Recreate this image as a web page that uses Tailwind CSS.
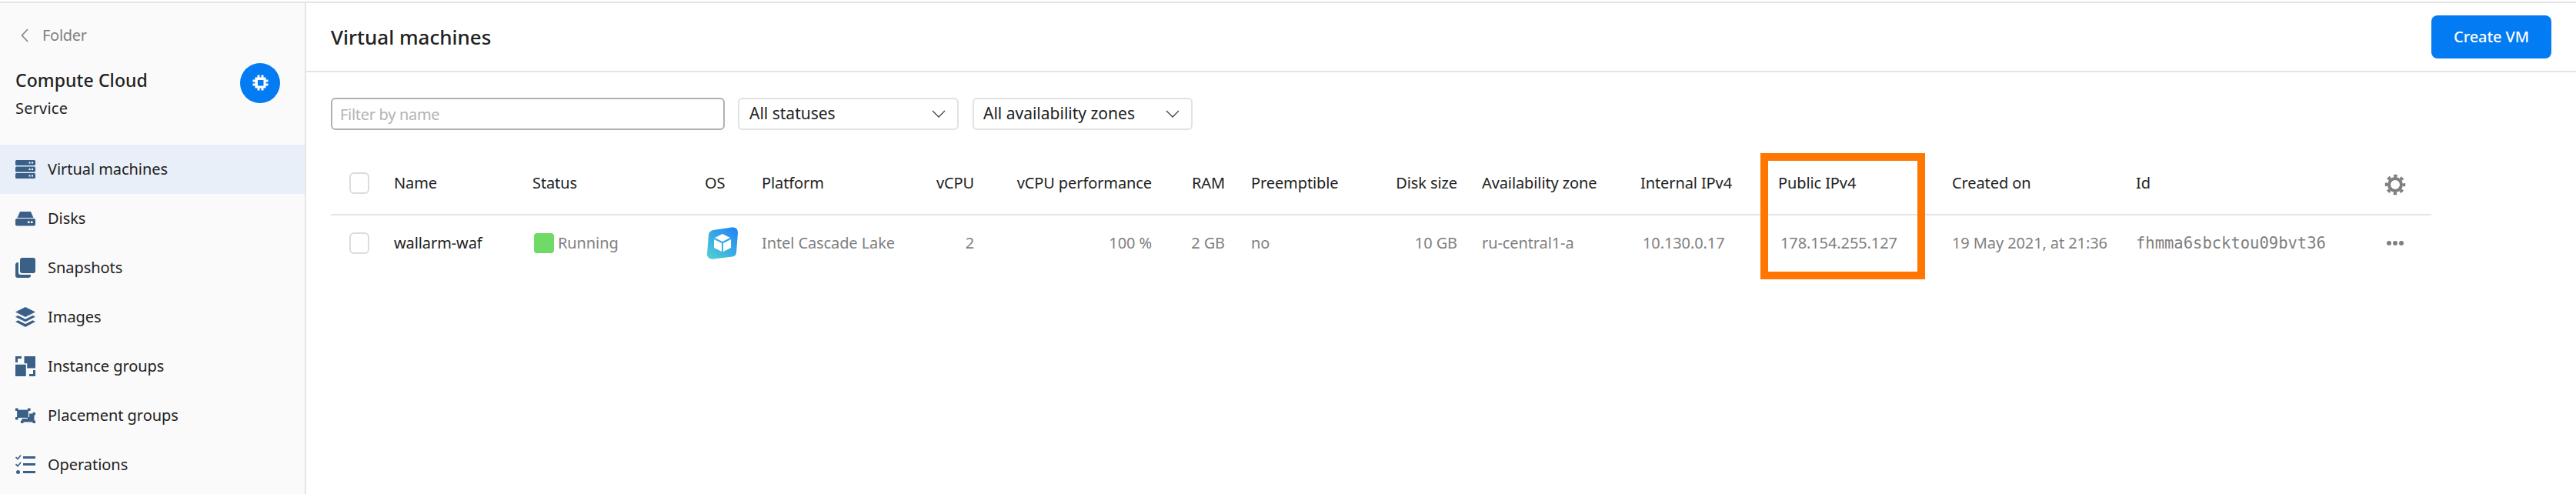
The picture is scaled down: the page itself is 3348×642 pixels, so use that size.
<!DOCTYPE html>
<html lang="en">
<head>
  <meta charset="UTF-8" />
  <title>Virtual machines</title>
  <script src="https://cdn.jsdelivr.net/npm/@tailwindcss/browser@4"></script>
</head>
<body class="bg-white font-['Noto_Sans',sans-serif] text-[#222222] overflow-hidden">
  <div class="relative h-[642px] w-[3348px] pt-[2px]">
    <div class="flex h-[640px] border-t-2 border-[#e5e5e5]">

      <!-- sidebar -->
      <aside class="w-[398px] shrink-0 border-r-2 border-[#e5e5e5] bg-[#fafafa]">
        <div class="flex h-[68px] items-center gap-[18px] pl-[27px] pt-[16px] text-[20px] tracking-[-0.3px] text-[#808080]">
          <svg class="h-[18px] w-[10px]" viewBox="0 0 10 18" fill="none" stroke="#808080" stroke-width="1.6"><path d="M9 1 1.5 9 9 17" /></svg>
          <span>Folder</span>
        </div>
        <div class="relative h-[116px] px-[20px]">
          <div class="pt-[12px] text-[23px] font-medium leading-[40px] tracking-[0.1px]">Compute Cloud</div>
          <div class="text-[20px] leading-[34px] tracking-[0.2px]">Service</div>
          <div class="absolute left-[312px] top-[10px] flex h-[52px] w-[52px] items-center justify-center rounded-full bg-[#027bf3]">
            <svg class="h-[26px] w-[26px]" viewBox="0 0 26 26" fill="#fff"><path fill-rule="evenodd" d="M6 4h3V1h3v3h2V1h3v3h3v3h3v3h-3v2h3v3h-3v3h-3v3h-3v-3h-2v3H9v-3H6v-3H3v-3h3v-2H3V7h3Zm3.500 3.500v7.500h7.500V7.500Z" transform="translate(0.500 1.500)" /></svg>
          </div>
        </div>
        <nav class="text-[20px] tracking-[-0.05px]">
          <a class="flex h-[64px] items-center gap-[16px] bg-[#e9eff9] pl-[20px]">
            <svg class="h-[26px] w-[26px]" viewBox="0 0 26 26" fill="#3b6088"><rect y="1" width="26" height="7" rx="1.500" /><rect y="9.500" width="26" height="7" rx="1.500" /><rect y="18" width="26" height="7" rx="1.500" /><path fill="#fff" d="M17.500 3.500h2v2h-2zM21 3.500h2v2h-2zM17.500 12h2v2h-2zM21 12h2v2h-2zM17.500 20.500h2v2h-2zM21 20.500h2v2h-2z" /></svg>
            <span>Virtual machines</span>
          </a>
          <a class="flex h-[64px] items-center gap-[16px] pl-[20px]">
            <svg class="h-[26px] w-[26px]" viewBox="0 0 26 26" fill="#3b6088"><path d="M6 4h14l3.500 8h-21Z" /><rect y="13" width="26" height="9.500" rx="2" /><path fill="#fff" d="M16 16.500h2.500V19H16zM20 16.500h2.500V19H20z" /></svg>
            <span>Disks</span>
          </a>
          <a class="flex h-[64px] items-center gap-[16px] pl-[20px]">
            <svg class="h-[26px] w-[26px]" viewBox="0 0 26 26" fill="#3b6088"><path d="M3.500 6H4v13a3 3 0 0 0 3 3h13v1a3 3 0 0 1-3 3H3a3 3 0 0 1-3-3V9.500A3.500 3.500 0 0 1 3.500 6Z" /><rect x="6" width="20" height="20" rx="3" /></svg>
            <span>Snapshots</span>
          </a>
          <a class="flex h-[64px] items-center gap-[16px] pl-[20px]">
            <svg class="h-[26px] w-[26px]" viewBox="0 0 26 26" fill="#3b6088"><path d="M13 0 26 6.500 13 13 0 6.500Z" /><path d="M3.500 11 13 15.700 22.500 11 26 12.800 13 19.300 0 12.800Z" /><path d="M3.500 17.200 13 22 22.500 17.200 26 19 13 26 0 19Z" /></svg>
            <span>Images</span>
          </a>
          <a class="flex h-[64px] items-center gap-[16px] pl-[20px]">
            <svg class="h-[26px] w-[26px]" viewBox="0 0 26 26" fill="#3b6088"><rect x="11.500" width="14.500" height="15.500" /><rect x="-1.500" y="10" width="16" height="17.500" stroke="#fafafa" stroke-width="1.500" /><path d="M0 0h8v3H3v5H0Z" /><path d="M26 18v8h-8v-3h5v-5Z" /></svg>
            <span>Instance groups</span>
          </a>
          <a class="flex h-[64px] items-center gap-[16px] pl-[20px]">
            <svg class="h-[26px] w-[26px]" viewBox="0 0 26 26" fill="#3b6088"><rect x="8.500" y="10.500" width="16" height="11" /><path d="M7 19.500h3.500V23H7zM22.500 9H26v3.500h-3.500zM22.500 19.500H26V23h-3.500z" /><rect x="1.500" y="5" width="16" height="11.500" stroke="#fafafa" stroke-width="1.200" /><path d="M0 3.500h3.500V7H0zM16 3.500h3.500V7H16zM0 15h3.500v3.500H0zM16 15h3.500v3.500H16z" /></svg>
            <span>Placement groups</span>
          </a>
          <a class="flex h-[64px] items-center gap-[16px] pl-[20px]">
            <svg class="h-[26px] w-[26px]" viewBox="0 0 26 26" fill="#3b6088"><path d="M10 2h16v3H10zM10 11h16v3H10zM10 21h16v3H10z" /><circle cx="3.500" cy="22.500" r="2.500" /><path fill="none" stroke="#3b6088" stroke-width="1.700" d="M.5 3 3 5.500 7 .8M.5 12.200 3 14.700 7 10" /></svg>
            <span>Operations</span>
          </a>
        </nav>
      </aside>

      <!-- main -->
      <main class="flex-1">
        <header class="flex h-[90px] items-center justify-between border-b-2 border-[#e5e5e5] pl-[32px] pr-[32px]">
          <h1 class="text-[26px] font-medium">Virtual machines</h1>
          <button class="h-[56px] w-[156px] rounded-[8px] bg-[#027bf3] text-[20px] font-medium tracking-[-0.1px] text-white">Create VM</button>
        </header>

        <div class="flex items-center pl-[32px] pt-[33px]">
          <input class="h-[42px] w-[512px] rounded-[6px] border-2 border-[#b0b0b0] px-[10px] text-[20px] tracking-[-0.3px] placeholder-[#b3b3b3] outline-none" placeholder="Filter by name" />
          <div class="ml-[17px] flex h-[42px] w-[287px] items-center justify-between rounded-[6px] border-2 border-[#e2e2e2] pl-[13px] pr-[15px] text-[21px]">
            <span>All statuses</span>
            <svg class="h-[10px] w-[18px]" viewBox="0 0 18 10" fill="none" stroke="#444" stroke-width="1.300"><path d="M1 1l8 8 8-8" /></svg>
          </div>
          <div class="ml-[18px] flex h-[42px] w-[286px] items-center justify-between rounded-[6px] border-2 border-[#e2e2e2] pl-[12px] pr-[15px] text-[21px]">
            <span>All availability zones</span>
            <svg class="h-[10px] w-[18px]" viewBox="0 0 18 10" fill="none" stroke="#444" stroke-width="1.300"><path d="M1 1l8 8 8-8" /></svg>
          </div>
        </div>

        <div class="ml-[32px] mt-[40px] w-[2730px] text-[20px] tracking-[-0.1px]">
          <div class="grid h-[71px] grid-cols-[82px_180px_224px_74px_224px_52px_231px_95px_166px_136px_238px_179px_226px_239px_322px_62px] items-center border-b-2 border-[#e5e5e5] pb-[11px] font-[450]">
            <div class="pl-[24px]"><div class="h-[28px] w-[26px] rounded-[6px] border-2 border-[#dcdcdc]"></div></div>
            <div>Name</div>
            <div>Status</div>
            <div>OS</div>
            <div>Platform</div>
            <div class="text-right">vCPU</div>
            <div class="text-right">vCPU performance</div>
            <div class="text-right">RAM</div>
            <div class="pl-[34px]">Preemptible</div>
            <div class="text-right">Disk size</div>
            <div class="pl-[32px]">Availability zone</div>
            <div>Internal IPv4</div>
            <div>Public IPv4</div>
            <div>Created on</div>
            <div>Id</div>
            <div class="pl-[1px] pt-[4px]">
              <svg class="h-[28px] w-[28px]" viewBox="0 0 28 28" fill="none" stroke="#7f7f7f"><circle cx="14" cy="14" r="8" stroke-width="4" /><circle cx="14" cy="14" r="11.500" stroke-width="3.500" stroke-dasharray="4.500 4.530" stroke-dashoffset="2.250" /></svg>
            </div>
          </div>
          <div class="grid h-[72px] grid-cols-[82px_180px_224px_74px_224px_52px_231px_95px_166px_136px_238px_179px_226px_239px_322px_62px] items-center text-[#7f7f7f]">
            <div class="pl-[24px]"><div class="h-[28px] w-[26px] rounded-[6px] border-2 border-[#dcdcdc]"></div></div>
            <div class="font-[450] text-[#222222]">wallarm-waf</div>
            <div class="flex items-center gap-[5px] pl-[2px]"><span class="h-[26px] w-[26px] rounded-[4px] bg-[#6fdb66]"></span>Running</div>
            <div class="pl-[2px]">
              <svg class="h-[42px] w-[42px]" viewBox="0 0 42 42">
                <defs><linearGradient id="os" x1="0.9" y1="0" x2="0.1" y2="1"><stop offset="0" stop-color="#2284f5" /><stop offset="1" stop-color="#4fcfd4" /></linearGradient></defs>
                <path fill="url(#os)" d="M9 4 33 .5c5-.5 8 2 8 7l-2 26c-.5 3-2 4.500-5 5L10 41.500c-6 1-9-2-9-7L3 10c.5-3 3-5.500 6-6Z" />
                <path fill="#fff" d="M21 9l10 5-10 5-10-5ZM10 16l10 5v11l-10-5ZM32 16v11l-10 5V21Z" />
              </svg>
            </div>
            <div>Intel Cascade Lake</div>
            <div class="text-right">2</div>
            <div class="text-right">100 %</div>
            <div class="text-right">2 GB</div>
            <div class="pl-[34px]">no</div>
            <div class="text-right">10 GB</div>
            <div class="pl-[32px]">ru-central1-a</div>
            <div class="pl-[3px]">10.130.0.17</div>
            <div class="pl-[3px]">178.154.255.127</div>
            <div>19 May 2021, at 21:36</div>
            <div class="font-['DejaVu_Sans_Mono',monospace] text-[20.500px] tracking-normal">fhmma6sbcktou09bvt36</div>
            <div class="pl-[3px]">
              <svg class="h-[8px] w-[24px]" viewBox="0 0 24 8" fill="#7f7f7f"><circle cx="4" cy="4" r="3" /><circle cx="12" cy="4" r="3" /><circle cx="20" cy="4" r="3" /></svg>
            </div>
          </div>
        </div>
      </main>
    </div>

    <!-- annotation box round the Public IPv4 column -->
    <div class="absolute left-[2288px] top-[199px] h-[164px] w-[214px] border-[10px] border-[#ff7700]"></div>
  </div>
</body>
</html>
